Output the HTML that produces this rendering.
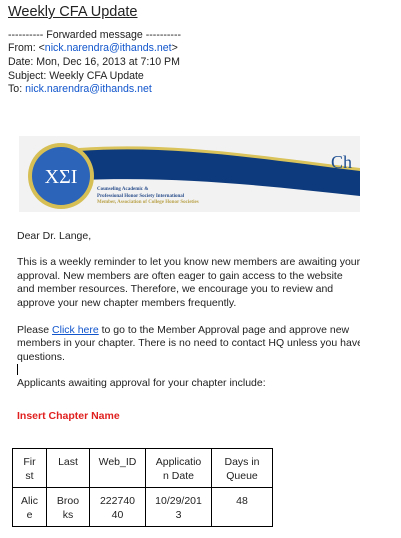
<!DOCTYPE html>
<html><head><style>
body{margin:0;width:401px;height:538px;background:#fff;overflow:hidden;font-family:"Liberation Sans",Arial,sans-serif;color:#222;position:relative}
.l{position:absolute;left:8px;font-size:10.6px;white-space:nowrap;line-height:13px}
a{color:#1155cc}
.b{position:absolute;left:17px;font-size:10.5px;white-space:nowrap;line-height:13px;color:#222}
.clip{position:absolute;left:0;top:0;width:360px;height:538px;overflow:hidden}
table{position:absolute;left:12px;top:448px;border-collapse:collapse;font-size:10.5px;color:#222}
td{border:1px solid #000;text-align:center;vertical-align:top;padding:6px 2px 0;line-height:14px;height:32px}
</style></head><body>
<div class="l" style="top:3px;font-size:14.5px;line-height:18px;text-decoration:underline;color:#222">Weekly CFA Update</div>
<div class="l" style="top:29px">---------- Forwarded message ----------</div>
<div class="l" style="top:42px">From: &lt;<a>nick.narendra@ithands.net</a>&gt;</div>
<div class="l" style="top:56px">Date: Mon, Dec 16, 2013 at 7:10 PM</div>
<div class="l" style="top:70px">Subject: Weekly CFA Update</div>
<div class="l" style="top:83px">To: <a>nick.narendra@ithands.net</a></div>
<div class="clip">
<svg style="position:absolute;left:19px;top:136px" width="341" height="76" viewBox="0 0 341 76">
<rect width="341" height="76" fill="#f2f2f2"/>
<path d="M60 14 C150 8 230 20 341 34 L341 60 C250 50 160 40 60 44Z" fill="#0d3a7c"/>
<path d="M60 12 C150 6 230 18 341 32 L341 35 C230 21 150 9 60 15Z" fill="#d9c35a"/>
<circle cx="42" cy="40" r="33" fill="#d6bf55"/>
<circle cx="42" cy="40" r="29" fill="#2b64b8"/>
<text x="42" y="47" text-anchor="middle" font-family="Liberation Serif" font-size="20" fill="#fff">ΧΣΙ</text>
<text x="78" y="54" font-family="Liberation Serif" font-size="5" font-weight="bold" fill="#2b4f8c">Counseling Academic &amp;</text>
<text x="78" y="61" font-family="Liberation Serif" font-size="5" font-weight="bold" fill="#2b4f8c">Professional Honor Society International</text>
<text x="78" y="67" font-family="Liberation Serif" font-size="5" font-weight="bold" fill="#b9a24a">Member, Association of College Honor Societies</text>
<text x="312" y="32" font-family="Liberation Serif" font-size="18" fill="#1e4e92">Ch</text>
</svg>
<div class="b" style="top:230px">Dear Dr. Lange,</div>
<div class="b" style="top:256px">This is a weekly reminder to let you know new members are awaiting your</div>
<div class="b" style="top:270px">approval. New members are often eager to gain access to the website</div>
<div class="b" style="top:283px">and member resources. Therefore, we encourage you to review and</div>
<div class="b" style="top:297px">approve your new chapter members frequently.</div>
<div class="b" style="top:324px">Please <a style="text-decoration:underline">Click here</a> to go to the Member Approval page and approve new</div>
<div class="b" style="top:337px">members in your chapter. There is no need to contact HQ unless you have</div>
<div class="b" style="top:351px">questions.</div>
<div style="position:absolute;left:17px;top:364px;width:1px;height:11px;background:#000"></div>
<div class="b" style="top:377px">Applicants awaiting approval for your chapter include:</div>
<div class="b" style="top:410px;color:#e0201f;font-weight:bold">Insert Chapter Name</div>
</div>
<table>
<tr><td style="width:29px">Fir<br>st</td><td style="width:38px">Last</td><td style="width:51px">Web_ID</td><td style="width:61px">Applicatio<br>n Date</td><td style="width:56px">Days in<br>Queue</td></tr>
<tr><td>Alic<br>e</td><td>Broo<br>ks</td><td>222740<br>40</td><td>10/29/201<br>3</td><td>48</td></tr>
</table>
</body></html>
